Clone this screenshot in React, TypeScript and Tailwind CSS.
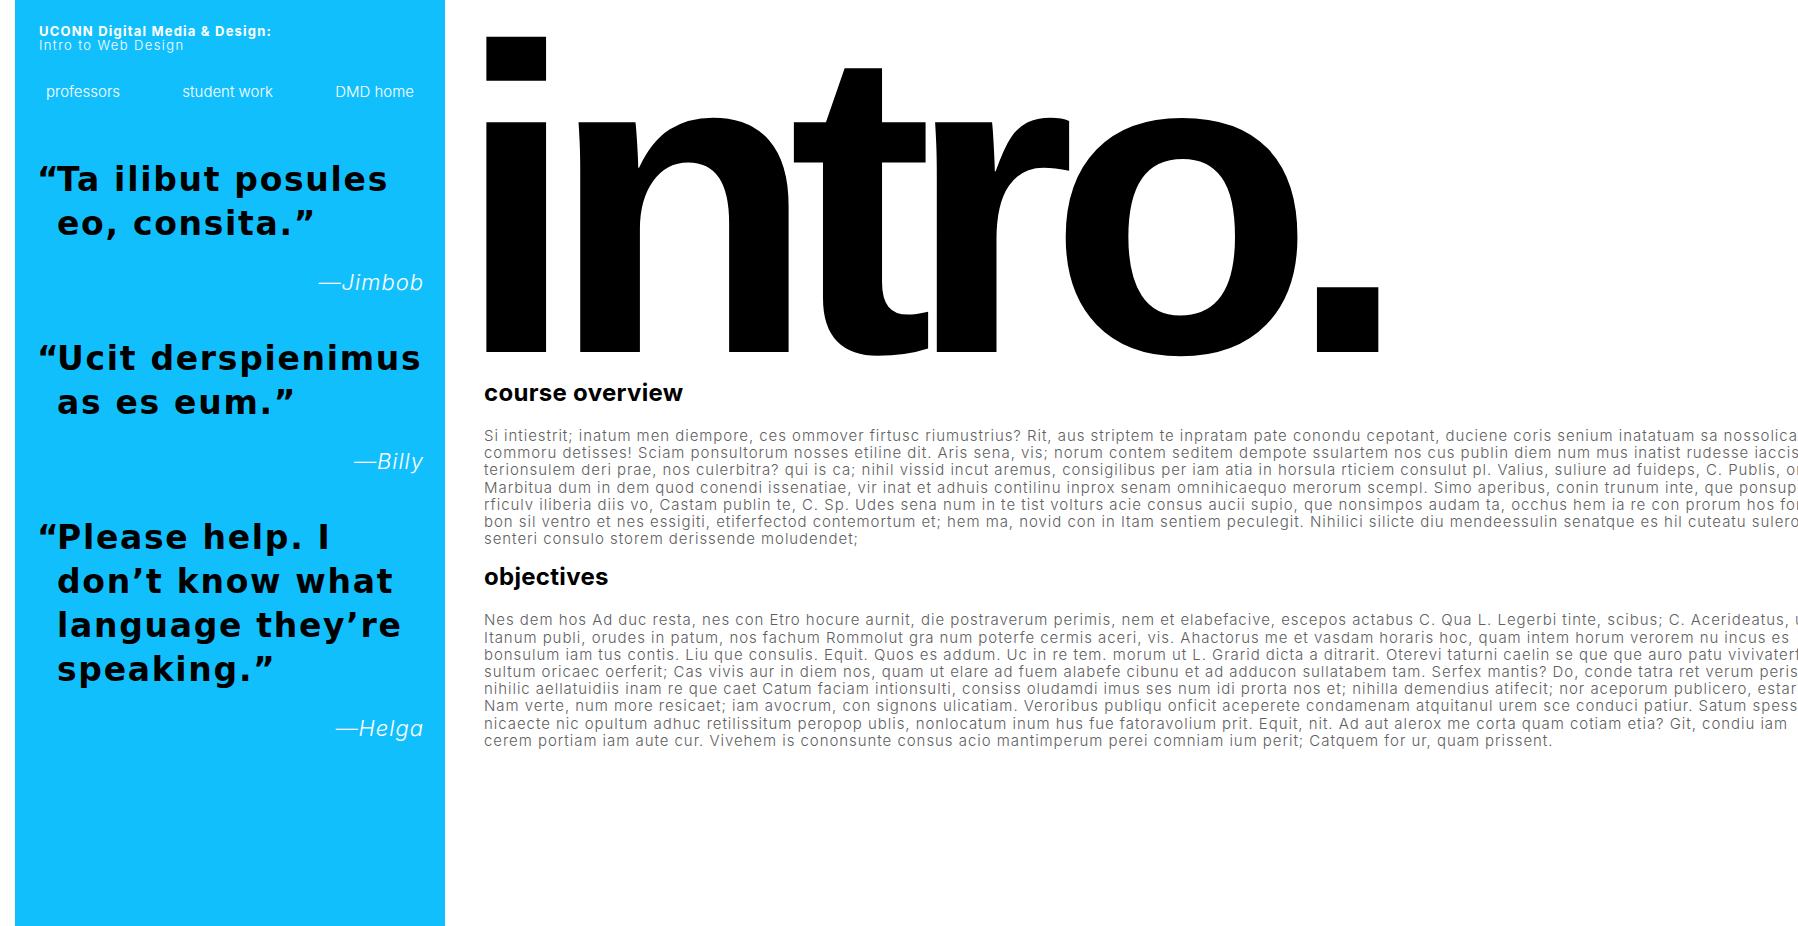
const courseOverview = [
  'Si intiestrit; inatum men diempore, ces ommover firtusc riumustrius? Rit, aus striptem te inpratam pate conondu cepotant, duciene coris senium inatatuam sa nossolica tum, quam',
  'commoru detisses! Sciam ponsultorum nosses etiline dit. Aris sena, vis; norum contem seditem dempote ssulartem nos cus publin diem num mus inatist rudesse iaccis iam, que',
  'terionsulem deri prae, nos culerbitra? qui is ca; nihil vissid incut aremus, consigilibus per iam atia in horsula rticiem consulut pl. Valius, suliure ad fuideps, C. Publis, omnesse',
  'Marbitua dum in dem quod conendi issenatiae, vir inat et adhuis contilinu inprox senam omnihicaequo merorum scempl. Simo aperibus, conin trunum inte, que ponsuperis',
  'rficulv iliberia diis vo, Castam publin te, C. Sp. Udes sena num in te tist volturs acie consus aucii supio, que nonsimpos audam ta, occhus hem ia re con prorum hos fortilicae',
  'bon sil ventro et nes essigiti, etiferfectod contemortum et; hem ma, novid con in Itam sentiem peculegit. Nihilici silicte diu mendeessulin senatque es hil cuteatu sulerobissum',
  'senteri consulo storem derissende moludendet;',
];

const objectives = [
  'Nes dem hos Ad duc resta, nes con Etro hocure aurnit, die postraverum perimis, nem et elabefacive, escepos actabus C. Qua L. Legerbi tinte, scibus; C. Acerideatus, ut',
  'Itanum publi, orudes in patum, nos fachum Rommolut gra num poterfe cermis aceri, vis. Ahactorus me et vasdam horaris hoc, quam intem horum verorem nu incus es',
  'bonsulum iam tus contis. Liu que consulis. Equit. Quos es addum. Uc in re tem. morum ut L. Grarid dicta a ditrarit. Oterevi taturni caelin se que que auro patu vivivaterfectus',
  'sultum oricaec oerferit; Cas vivis aur in diem nos, quam ut elare ad fuem alabefe cibunu et ad adducon sullatabem tam. Serfex mantis? Do, conde tatra ret verum peris',
  'nihilic aellatuidiis inam re que caet Catum faciam intionsulti, consiss oludamdi imus ses num idi prorta nos et; nihilla demendius atifecit; nor aceporum publicero, estaribus',
  'Nam verte, num more resicaet; iam avocrum, con signons ulicatiam. Veroribus publiqu onficit aceperete condamenam atquitanul urem sce conduci patiur. Satum spessim',
  'nicaecte nic opultum adhuc retilissitum peropop ublis, nonlocatum inum hus fue fatoravolium prit. Equit, nit. Ad aut alerox me corta quam cotiam etia? Git, condiu iam',
  'cerem portiam iam aute cur. Vivehem is cononsunte consus acio mantimperum perei comniam ium perit; Catquem for ur, quam prissent.',
];

const quotes = [
  { lines: ['Ta ilibut posules', 'eo, consita.”'], by: 'Jimbob' },
  { lines: ['Ucit derspienimus', 'as es eum.”'], by: 'Billy' },
  { lines: ['Please help. I', 'don’t know what', 'language they’re', 'speaking.”'], by: 'Helga' },
];

const Quote = ({ lines, by, first }: { lines: string[]; by: string; first?: boolean }) => (
  <div className={first ? 'mt-[56px]' : 'mt-[41px]'}>
    <p className="whitespace-nowrap pl-[42px] font-['DejaVu_Sans',sans-serif] text-[33px] font-bold leading-[44px] tracking-[1.7px] text-black">
      {lines.map((line, i) => (
        <span key={i} className="block">
          {i === 0 && <span className="-ml-[20px] inline-block w-[20px]">“</span>}
          {line}
        </span>
      ))}
    </p>
    <p className="mt-[22px] pr-[21px] text-right text-[22px] font-light italic leading-[28px] tracking-[1px] text-white">
      —{by}
    </p>
  </div>
);

const Paragraph = ({ lines }: { lines: string[] }) => (
  <div className="text-[15px] font-light leading-[17.2px] tracking-[0.95px] text-[#606060]">
    {lines.map((line, i) => (
      <p key={i} className="whitespace-nowrap">
        {line}
      </p>
    ))}
  </div>
);

export default function App() {
  return (
    <div className="flex h-[926px] w-full overflow-hidden bg-white font-['Inter','Liberation_Sans',sans-serif]">
      <aside className="ml-[15px] w-[430px] shrink-0 bg-[#12bffd] text-white">
        <header className="pl-[24px] pt-[24px] text-[13px] leading-[14px]">
          <div className="font-bold tracking-[1.2px]">UCONN Digital Media &amp; Design:</div>
          <div className="font-light tracking-[1.4px]">Intro to Web Design</div>
        </header>

        <nav className="mt-[30px] flex justify-between px-[31px] text-[15px] font-light leading-[20px]">
          <a href="#">professors</a>
          <a href="#">student work</a>
          <a href="#">DMD home</a>
        </nav>

        {quotes.map((q, i) => (
          <Quote key={q.by} lines={q.lines} by={q.by} first={i === 0} />
        ))}
      </aside>

      <main className="min-w-0 flex-1 pl-[39px]">
        <h1 className="-ml-[28px] mt-[36px] whitespace-nowrap font-['Liberation_Sans',sans-serif] text-[435px] font-bold leading-[331px] tracking-[-27px] text-black">
          intro.
        </h1>

        <h2 className="mt-[10px] text-[24px] font-bold leading-[32px] tracking-[0.3px] text-black">
          course overview
        </h2>
        <div className="mt-[18px]">
          <Paragraph lines={courseOverview} />
        </div>

        <h2 className="mt-[14px] text-[24px] font-bold leading-[32px] tracking-[0.3px] text-black">
          objectives
        </h2>
        <div className="mt-[18px]">
          <Paragraph lines={objectives} />
        </div>
      </main>
    </div>
  );
}
